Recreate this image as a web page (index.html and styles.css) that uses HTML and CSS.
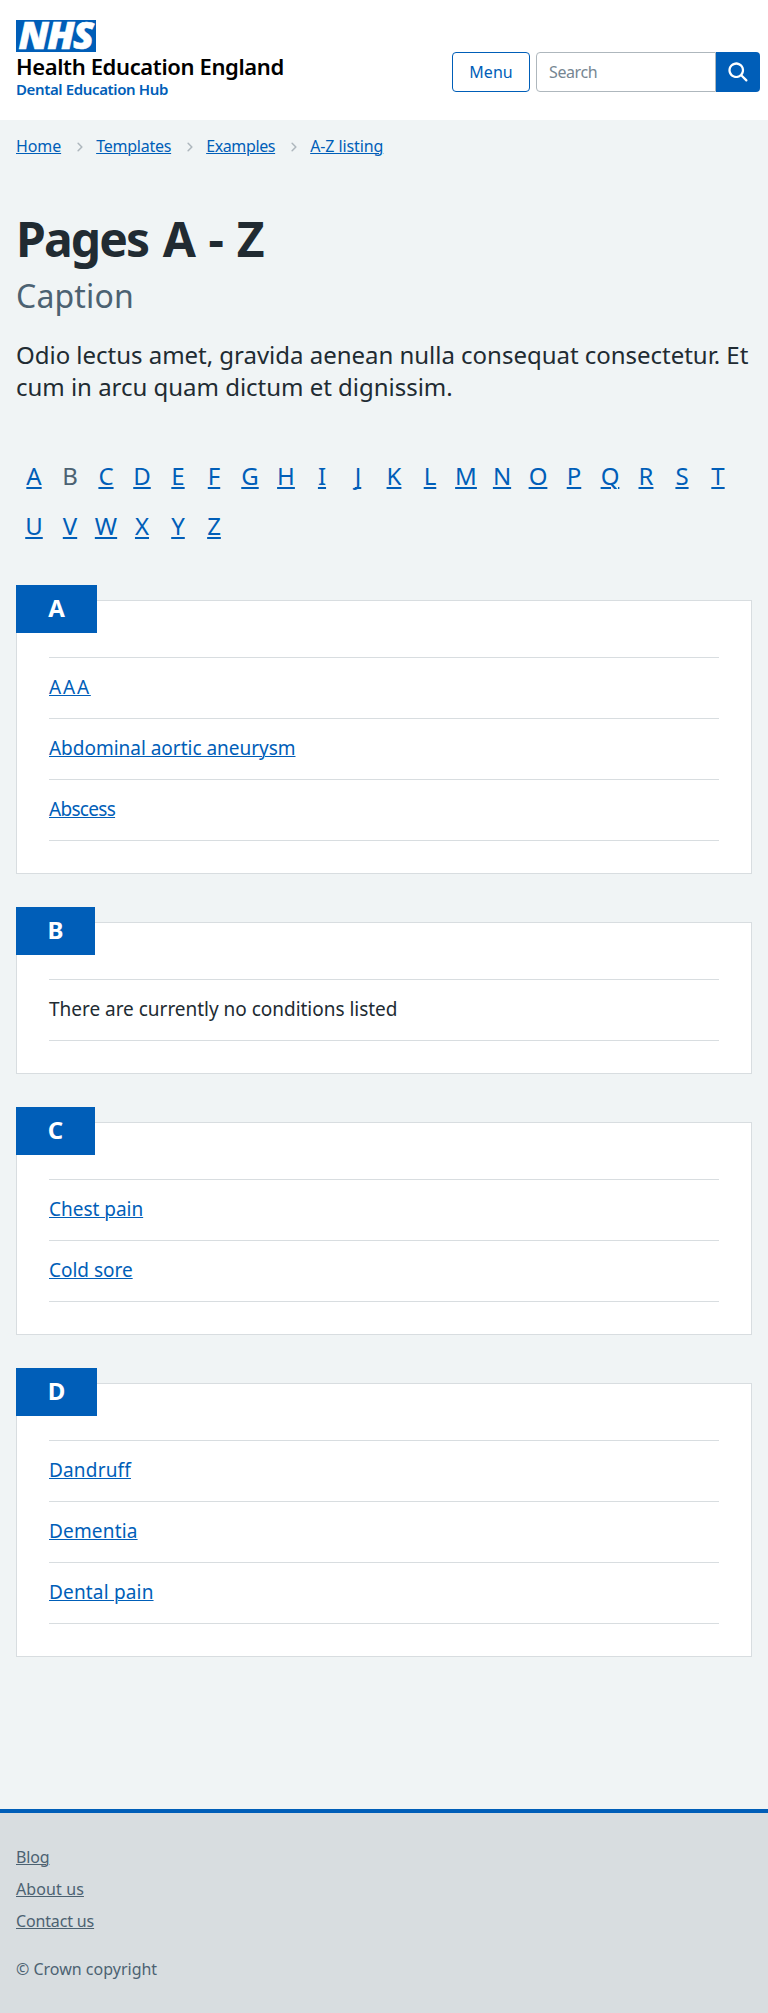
FILE: index.html
```html
<!DOCTYPE html>
<html lang="en">
<head>
<meta charset="utf-8">
<title>Pages A - Z</title>
<link rel="stylesheet" href="styles.css">
</head>
<body>
<header class="header">
  <a class="brand" href="#">
    <svg class="brand-logo" viewBox="0 0 80 32" width="80" height="32" role="img" aria-label="NHS">
      <rect width="80" height="32" fill="#005eb8"/>
      <text class="logo-text" x="2.5" y="29" textLength="74" lengthAdjust="spacingAndGlyphs">NHS</text>
    </svg>
    <span class="brand-org">Health Education England</span>
    <span class="brand-sub">Dental Education Hub</span>
  </a>
  <div class="header-tools">
    <button class="menu-button" type="button">Menu</button>
    <form class="search">
      <input class="search-input" type="text" placeholder="Search" aria-label="Search">
      <button class="search-button" type="button" aria-label="Search">
        <svg width="27" height="27" viewBox="0 0 24 24" fill="#fff"><path d="M19.71 18.29l-4.11-4.1a7 7 0 1 0-1.41 1.41l4.1 4.11a1 1 0 0 0 1.42 0 1 1 0 0 0 0-1.42zM5 10a5 5 0 1 1 5 5 5 5 0 0 1-5-5z"/></svg>
      </button>
    </form>
  </div>
</header>

<nav class="breadcrumb">
  <a href="#">Home</a>
  <svg class="chevron" viewBox="0 0 24 24"><path d="M15.5 12a1 1 0 0 1-.29.71l-5 5a1 1 0 0 1-1.42-1.42l4.3-4.29-4.3-4.29a1 1 0 0 1 1.42-1.42l5 5a1 1 0 0 1 .29.71z"/></svg>
  <a class="tight" href="#">Templates</a>
  <svg class="chevron" viewBox="0 0 24 24"><path d="M15.5 12a1 1 0 0 1-.29.71l-5 5a1 1 0 0 1-1.42-1.42l4.3-4.29-4.3-4.29a1 1 0 0 1 1.42-1.42l5 5a1 1 0 0 1 .29.71z"/></svg>
  <a class="tighter" href="#">Examples</a>
  <svg class="chevron" viewBox="0 0 24 24"><path d="M15.5 12a1 1 0 0 1-.29.71l-5 5a1 1 0 0 1-1.42-1.42l4.3-4.29-4.3-4.29a1 1 0 0 1 1.42-1.42l5 5a1 1 0 0 1 .29.71z"/></svg>
  <a href="#">A-Z listing</a>
</nav>

<main class="main">
  <h1 class="title">Pages A - Z</h1>
  <p class="caption">Caption</p>
  <p class="lede">Odio lectus amet, gravida aenean nulla consequat consectetur. Et cum in arcu quam dictum et dignissim.</p>

  <ol class="letters">
    <li><a href="#A">A</a></li><li><span>B</span></li><li><a href="#C">C</a></li><li><a href="#D">D</a></li><li><a href="#">E</a></li><li><a href="#">F</a></li><li><a href="#">G</a></li><li><a href="#">H</a></li><li><a href="#">I</a></li><li><a class="solid" href="#">J</a></li><li><a href="#">K</a></li><li><a href="#">L</a></li><li><a href="#">M</a></li><li><a href="#">N</a></li><li><a href="#">O</a></li><li><a href="#">P</a></li><li><a href="#">Q</a></li><li><a href="#">R</a></li><li><a href="#">S</a></li><li><a href="#">T</a></li><li><a href="#">U</a></li><li><a href="#">V</a></li><li><a href="#">W</a></li><li><a href="#">X</a></li><li><a href="#">Y</a></li><li><a href="#">Z</a></li>
  </ol>

  <section class="card" id="A">
    <h2 class="card-label wide">A</h2>
    <ul class="list">
      <li><a class="spread" href="#">AAA</a></li>
      <li><a href="#">Abdominal aortic aneurysm</a></li>
      <li><a class="narrow" href="#">Abscess</a></li>
    </ul>
  </section>
  <section class="card" id="B">
    <h2 class="card-label">B</h2>
    <ul class="list">
      <li>There are currently no conditions listed</li>
    </ul>
  </section>
  <section class="card" id="C">
    <h2 class="card-label">C</h2>
    <ul class="list">
      <li><a href="#">Chest pain</a></li>
      <li><a href="#">Cold sore</a></li>
    </ul>
  </section>
  <section class="card" id="D">
    <h2 class="card-label wide">D</h2>
    <ul class="list">
      <li><a class="loose" href="#">Dandruff</a></li>
      <li><a class="loose" href="#">Dementia</a></li>
      <li><a class="loose" href="#">Dental pain</a></li>
    </ul>
  </section>
</main>

<footer class="footer">
  <ul class="footer-links">
    <li><a href="#">Blog</a></li>
    <li><a class="loose" href="#">About us</a></li>
    <li><a href="#">Contact us</a></li>
  </ul>
  <p class="copyright">© Crown copyright</p>
</footer>
</body>
</html>
```
FILE: styles.css
```css
* { box-sizing: border-box; }
body {
  margin: 0;
  background: #f0f4f5;
  color: #212b32;
  font: 16px/24px "Noto Sans", "Open Sans", sans-serif;
  font-variant-ligatures: none;
}
h1, h2, p, ul, ol { margin: 0; padding: 0; }
ul, ol { list-style: none; }
a { color: #005eb8; text-decoration-thickness: 1px; text-underline-offset: 1px; }

.header {
  display: flex;
  justify-content: space-between;
  align-items: flex-start;
  height: 120px;
  padding: 20px 8px 0 16px;
  background: #fff;
}
.brand { display: flex; flex-direction: column; text-decoration: none; }
.brand-logo { display: block; }
.logo-text { font: italic 800 36.5px "Open Sans", sans-serif; letter-spacing: -1.5px; fill: #fff; stroke: #fff; stroke-width: 0.6px; }
.brand-org {
  margin-top: 2px;
  color: #000;
  font-size: 22px;
  font-weight: 600;
  line-height: 24px;
  letter-spacing: -0.37px;
}
.brand-sub { margin-top: 1px; font-size: 15px; font-weight: 600; line-height: 20px; letter-spacing: -0.37px; }

.header-tools { display: flex; gap: 6px; padding-top: 32px; }
.menu-button {
  width: 78px;
  height: 40px;
  padding: 0;
  border: 1px solid #005eb8;
  border-radius: 4px;
  background: #fff;
  color: #005eb8;
  font: inherit;
}
.search { display: flex; }
.search-input {
  width: 180px;
  height: 40px;
  padding: 0 12px;
  border: 1px solid #aeb7bd;
  border-radius: 4px 0 0 4px;
  font: inherit;
  letter-spacing: -0.4px;
}
.search-input::placeholder { color: #768692; opacity: 1; }
.search-button {
  display: flex;
  align-items: center;
  justify-content: center;
  width: 44px;
  height: 40px;
  padding: 0;
  border: 0;
  border-radius: 0 4px 4px 0;
  background: #005eb8;
}

.breadcrumb { display: flex; align-items: center; height: 24px; margin: 14px 16px 0; letter-spacing: -0.1px; }
.breadcrumb .tight { letter-spacing: -0.24px; }
.breadcrumb .tighter { letter-spacing: -0.37px; }
.chevron { width: 18px; height: 18px; margin: 2px 7px 0 10px; fill: #aeb7bd; }

.main { padding: 53px 16px 104px; }
.title { font-size: 48px; font-weight: 700; line-height: 56px; letter-spacing: -1.9px; word-spacing: 4px; }
.caption { margin-top: 9px; color: #4c6272; font-size: 32px; line-height: 40px; letter-spacing: 0.17px; }
.lede { margin-top: 23px; font-size: 24px; line-height: 32px; letter-spacing: -0.02px; }

.letters {
  display: grid;
  grid-template-columns: repeat(20, 36px);
  grid-auto-rows: 50px;
  margin: 48px 0 49px;
  color: #4c6272;
  font-size: 24px;
  line-height: 50px;
  text-align: center;
}
.letters a { text-decoration-thickness: 2px; text-underline-offset: 2px; }
.letters .solid { text-decoration-skip-ink: none; }

.card {
  margin-bottom: 48px;
  padding: 0 32px 32px;
  border: 1px solid #d8dde0;
  background: #fff;
}
.card-label {
  width: 79px;
  height: 48px;
  margin: -16px 0 24px -33px;
  background: #005eb8;
  color: #fff;
  font-size: 24px;
  font-weight: 700;
  line-height: 46px;
  text-align: center;
}
.card-label.wide { width: 81px; }
.list { border-top: 1px solid #d8dde0; }
.list li { padding: 15px 0 17px; border-bottom: 1px solid #d8dde0; font-size: 19px; line-height: 28px; letter-spacing: -0.02px; }
.list .spread { letter-spacing: 1.8px; }
.list .narrow { letter-spacing: -0.7px; }
.list .loose { letter-spacing: 0.17px; }

.footer {
  padding: 32px 16px;
  border-top: 4px solid #005eb8;
  background: #d8dde0;
  color: #4c6272;
}
.footer a { color: inherit; letter-spacing: -0.15px; }
.footer a.loose { letter-spacing: 0.1px; }
.footer-links { display: flex; flex-direction: column; gap: 8px; }
.copyright { margin-top: 24px; }
```
